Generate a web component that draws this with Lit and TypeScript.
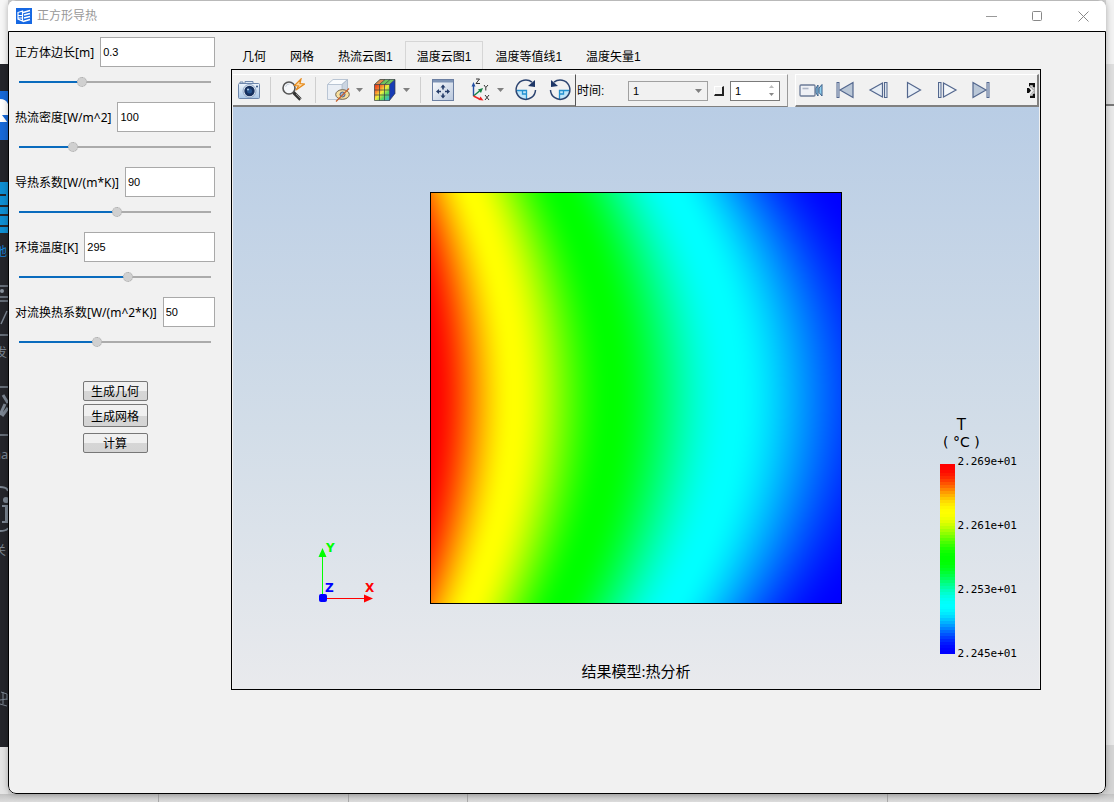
import { LitElement, html, css, svg } from "lit";
import { customElement, state, query } from "lit/decorators.js";

interface Field {
  id: string;
  label: string;
  value: string;
  position: number;
}

const STOPS = [
  [0, 0, 255],
  [0, 255, 255],
  [0, 255, 0],
  [255, 255, 0],
  [255, 0, 0],
];

/** Colour of a normalised temperature, with soft plateaus at each stop. */
function colorAt(t: number): number[] {
  const s = Math.min(0.9999, Math.max(0, t)) * 4;
  const i = Math.floor(s);
  const u = s - i;
  const k = u * u * (3 - 2 * u);
  return STOPS[i].map((c, n) => Math.round(c + (STOPS[i + 1][n] - c) * k));
}

/** Normalised temperature; x in 0..1 from the heated side, v in -1..1. */
function temperature(x: number, v: number): number {
  const mid = 1 - 1.314 * x + 0.404 * x * x;
  const edge = 0.875 - 1.3165 * x + 0.4415 * x * x;
  return mid - (mid - edge) * v * v;
}

@customElement("heat-map")
export class HeatMap extends LitElement {
  static styles = css`
    :host { display: block; box-sizing: border-box; border: 1px solid #000; }
    .field { display: block; width: 100%; height: 100%; }
  `;

  @query("canvas") private canvas!: HTMLCanvasElement;

  firstUpdated() {
    const n = 410;
    const ctx = this.canvas.getContext("2d")!;
    const img = ctx.createImageData(n, n);
    for (let y = 0; y < n; y++) {
      const v = (2 * (y + 0.5)) / n - 1;
      for (let x = 0; x < n; x++) {
        const c = colorAt(temperature((x + 0.5) / n, v));
        const o = (y * n + x) * 4;
        img.data[o] = c[0];
        img.data[o + 1] = c[1];
        img.data[o + 2] = c[2];
        img.data[o + 3] = 255;
      }
    }
    ctx.putImageData(img, 0, 0);
  }

  render() {
    return html`<canvas class="field" width="410" height="410"></canvas>`;
  }
}

@customElement("color-legend")
export class ColorLegend extends LitElement {
  static styles = css`
    :host { display: block; color: #000; font-family: "DejaVu Sans Mono", monospace; }
    .title { font: 15px/17px "DejaVu Sans", "Noto Sans CJK SC", sans-serif; text-align: center; width: 42px; white-space: nowrap; }
    .unit { font-size: 14px; }
    .scale { display: flex; gap: 2px; margin-top: 5px; }
    .bar { width: 15px; height: 190px; margin: 8px 0 6px; display: flex; flex-direction: column; }
    .step { flex: 1; }
    .ticks { display: flex; flex-direction: column; justify-content: space-between; font-size: 11px; line-height: 12px; }
  `;

  render() {
    const steps = Array.from({ length: 64 }, (_, i) => colorAt(1 - i / 63));
    return html`
      <div class="title">T</div>
      <div class="title unit">( °C )</div>
      <div class="scale">
        <div class="bar">
          ${steps.map((c) => html`<div class="step" style="background:rgb(${c.join(",")})"></div>`)}
        </div>
        <div class="ticks">
          <span>2.269e+01</span><span>2.261e+01</span><span>2.253e+01</span><span>2.245e+01</span>
        </div>
      </div>
    `;
  }
}

const shapes: Record<string, unknown> = {
  camera: svg`
    <defs><linearGradient id="cam" x2="0" y2="1"><stop stop-color="#eef5fc"/><stop offset="1" stop-color="#a9c6e6"/></linearGradient></defs>
    <path d="M8 5.500V3.500h8v2M3 5.500V4h3v1.500" fill="#dce8f5" stroke="#7189ad"/>
    <rect x="1.500" y="5.500" width="21" height="15" rx="1" fill="url(#cam)" stroke="#6d86ab"/>
    <circle cx="12.500" cy="13" r="6.500" fill="#e4edf7" stroke="#8fa5c4"/>
    <circle cx="12.500" cy="13" r="5.200" fill="#16305e"/>
    <circle cx="12.500" cy="13" r="2.500" fill="#28558f"/>
    <circle cx="11" cy="11.500" r="1" fill="#b7d3f0"/><circle cx="20" cy="8.500" r="1" fill="#31507f"/>`,
  probe: svg`
    <circle cx="8" cy="10" r="6" fill="#f5f7fa" stroke="#555" stroke-width="1.600"/>
    <path d="M4.500 9a4 4 0 0 1 4-3" fill="none" stroke="#c9d2dc"/>
    <path d="m12.500 14.500 7 7" stroke="#333" stroke-width="3.200"/><path d="m15 16 5 5" stroke="#8b8b8b" stroke-width="1"/>
    <path d="M20 1 13.500 7.500l4 .5-2.500 4 8.500-6-4.500-.5z" fill="#ffd9a0" stroke="#e58a1c" stroke-width="1.200"/>`,
  hide: svg`
    <path d="M1.500 6.500 7 1.500h14.500L16 6.500z" fill="#fafcfe" stroke="#b9c5d4"/>
    <path d="M16 6.500l5.500-5v13l-5.500 7z" fill="#cbd5e1" stroke="#b0bdcd"/>
    <path d="M1.500 6.500H16v15H1.500z" fill="#e9eef5" stroke="#b9c5d4"/>
    <ellipse cx="16.500" cy="16.500" rx="6.800" ry="4.800" fill="#f8dfa0" stroke="#71634b"/>
    <circle cx="16.500" cy="16.500" r="2.500" fill="#9fb4d0" stroke="#4c648b"/>
    <path d="M10 23.500 23 10.500" stroke="#c8602d" stroke-width="1.200"/>`,
  contour: svg`
    <defs><linearGradient id="ct" x2="1" y2="1"><stop stop-color="#e62b18"/><stop offset=".28" stop-color="#f9802b"/><stop offset=".48" stop-color="#f4ed3c"/><stop offset=".7" stop-color="#59d860"/><stop offset="1" stop-color="#29a9e8"/></linearGradient></defs>
    <path d="M1.500 6.500 7 1.500h15l-5.500 5z" fill="#70c35b"/><path d="M1.500 6.500 7 1.500h5l-5.500 5z" fill="#df8a4e"/>
    <path d="M16.500 6.500l5.500-5v14l-5.500 7z" fill="#173cb5"/>
    <path d="M1.500 6.500h15v16h-15z" fill="url(#ct)"/>
    <path d="M1.500 6.500h15v16h-15zM6.500 6.500v16M11.500 6.500v16M1.500 12h15M1.500 17h15M1.500 6.500 7 1.500h15l-5.500 5M6.500 6.500l5.500-5M11.500 6.500l5.500-5M22 1.500v14l-5.500 7" fill="none" stroke="#333b43" stroke-width=".7"/>`,
  fit: svg`
    <defs><linearGradient id="ft" x2="1" y2="1"><stop stop-color="#fff"/><stop offset="1" stop-color="#b7c6dc"/></linearGradient></defs>
    <rect x="1.500" y="1.500" width="21" height="21" fill="url(#ft)" stroke="#6b7fa2"/>
    <path d="M2 2h20v2.500H2z" fill="#7e94b6"/>
    <path d="M12 6.500 9.500 9.500h5zM12 20.500l-2.500-3h5zM5 13.500 8 11v5zM19 13.500 16 11v5z" fill="#263d69"/>
    <path d="M12 9v2.500M12 15.500V18M7 13.500h3M14 13.500h3" stroke="#263d69" stroke-width="1.600"/>`,
  axes: svg`
    <g transform="translate(1 0)">
    <path d="M5.500 18V7" stroke="#2450a4" stroke-width="1.400"/><path d="M5.500 4 3.500 8.500h4z" fill="#2450a4"/>
    <path d="m5.500 18 6-5" stroke="#128244" stroke-width="1.400"/><path d="m15 10-5 1.500 3 3.500z" fill="#128244"/>
    <path d="m5.500 18 6 3" stroke="#e22" stroke-width="1.400"/><path d="m15.500 22.500-3-4-2 3.500z" fill="#e22"/>
    <path d="M8 1h3.500L8 5.500h4M16 7l1.800 2.500L20 7M17.800 9.500v3M17 17l4 5M21 17l-4 5" fill="none" stroke="#333"/></g>`,
  clockwise: svg`
    <path d="M2 12h10.500v9.500A10 10 0 0 1 2 12z" fill="#bfe5fa"/><path d="M3 12.500h9.500V21M8.500 12.500V16h4" fill="none" stroke="#2390cf" stroke-width="1.300"/>
    <path d="M18 4.200A9.700 9.700 0 1 0 21.500 12" fill="none" stroke="#2c4470" stroke-width="1.500"/><path d="M21 2v7l-7-1z" fill="#1c3566"/>`,
  counter: svg`
    <path d="M22 12H11.500v9.500A10 10 0 0 0 22 12z" fill="#bfe5fa"/><path d="M21 12.500h-9.500V21M15.500 12.500V16h-4" fill="none" stroke="#2390cf" stroke-width="1.300"/>
    <path d="M6 4.200A9.700 9.700 0 1 1 2.500 12" fill="none" stroke="#2c4470" stroke-width="1.500"/><path d="M3 2v7l7-1z" fill="#1c3566"/>`,
  video: svg`
    <rect x="1" y="7" width="15" height="11" rx="1" fill="#eef0f5" stroke="#6c7b97" stroke-width="1.300"/><path d="M3.500 10.500h6" stroke="#adb6c6" stroke-width="1.600"/>
    <path d="m17 10 2-3v11l-2-3z" fill="#8fd0ef" stroke="#3c5f88"/><path d="m20 10 3-3.500V18l-3-3.500z" fill="#8fd0ef" stroke="#3c5f88"/>`,
  first: svg`<path d="M20 4.500v15L7 12z" fill="#bac7d7" stroke="#53678e" stroke-width="1.200"/><rect x="4" y="4.500" width="2" height="15" fill="#dce5ef" stroke="#53678e"/>`,
  back: svg`<path d="M15.500 5v14L3 12z" fill="#e6edf5" stroke="#53678e" stroke-width="1.200"/><rect x="17.500" y="4.500" width="2.500" height="15" fill="#dce5ef" stroke="#53678e"/>`,
  play: svg`<path d="M6.500 4.500v15L19.500 12z" fill="#e9eff6" stroke="#53678e" stroke-width="1.200"/>`,
  next: svg`<path d="M8.500 5v14L21 12z" fill="#f4f7fa" stroke="#53678e" stroke-width="1.200"/><rect x="3.500" y="4.500" width="2.500" height="15" fill="#dce5ef" stroke="#53678e"/>`,
  last: svg`<path d="M4 4.500v15L17 12z" fill="#bac7d7" stroke="#53678e" stroke-width="1.200"/><rect x="18" y="4.500" width="2" height="15" fill="#dce5ef" stroke="#53678e"/>`,
};

@customElement("app-root")
export class AppRoot extends LitElement {
  static styles = css`
    * { box-sizing: border-box; }
    :host {
      display: grid;
      grid-template: 1fr 8px / 8px 1fr 8px;
      height: 100vh;
      background: #d8d8d8;
      color: #000;
      font: 12px/16px "Noto Sans", "Noto Sans CJK SC", sans-serif;
      overflow: hidden;
    }
    button, input, select { font: inherit; color: inherit; margin: 0; padding: 0; }

    .strip-left { grid-area: 1 / 1; background: linear-gradient(#f6f6f6 64px, #24252a 64px 747px, #e4e4e4 747px); overflow: hidden; }
    .strip-left svg { display: block; }
    .strip-right { grid-area: 1 / 3; background: linear-gradient(#f2f2f2 64px, #dedede 64px 104px, #777 104px 106px, #e8e8e8 106px 745px, #d4d4d4 745px); }
    .strip-bottom {
      grid-area: 2 / 1 / 3 / 4;
      display: grid;
      grid-template-columns: 158fr 190fr 119fr 420fr 227fr;
      background: linear-gradient(#c2c2c2, #dcdcdc);
    }
    .strip-bottom div + div { border-left: 1px solid #a8a8a8; }

    .window {
      grid-area: 1 / 2;
      display: flex;
      flex-direction: column;
      background: #f1f1f1;
      border-radius: 8px;
      overflow: hidden;
      box-shadow: 0 0 6px rgba(0, 0, 0, 0.3);
    }
    .titlebar {
      height: 31px;
      display: flex;
      align-items: center;
      background: #fff;
      border-top: 1px solid #b9b9b9;
      color: #999;
      padding-left: 8px;
    }
    .titlebar .name { margin: 0 auto 0 5px; font-weight: 400; font-size: 12px; }
    .caption { width: 46px; height: 30px; border: 0; background: none; display: grid; place-items: center; }

    .body {
      flex: 1;
      display: flex;
      align-items: stretch;
      border: 1px solid #000;
      border-radius: 0 0 8px 8px;
      padding: 5px 64px 103px 6px;
      gap: 15px;
    }
    .params { width: 200px; flex: none; }
    .field { display: grid; grid-template-columns: auto 1fr; align-items: center; column-gap: 6px; padding-bottom: 5px; }
    .field-label { white-space: nowrap; padding-top: 2px; }
    .text {
      width: 100%;
      min-width: 0;
      height: 30px;
      border: 1px solid #a9a9a9;
      background: #fff;
      padding: 0 2px;
      font: 11px/16px "Liberation Sans", sans-serif;
      outline: 0;
    }
    .range { grid-column: 1 / 3; margin: 0 4px; height: 30px; appearance: none; background: none; display: block; min-width: 0; }
    .range::-webkit-slider-runnable-track {
      height: 2px;
      background: linear-gradient(90deg, #0a6bbd var(--fill), #ababab var(--fill));
    }
    .range::-webkit-slider-thumb {
      appearance: none;
      width: 10px;
      height: 10px;
      margin-top: -4px;
      border-radius: 50%;
      background: #d0d0d0;
      border: 1px dotted #a8a8a8;
    }
    .actions { display: flex; flex-direction: column; align-items: center; gap: 3px; padding-top: 19px; }
    .action {
      width: 65px;
      height: 20px;
      border: 1px solid #777;
      border-radius: 2px;
      background: linear-gradient(#f0f0f0 50%, #d6d6d6 50%, #d4d4d4);
      line-height: 16px;
      padding-top: 2px;
    }
    .action.tall { height: 23px; }
    .action:last-child { margin-top: 3px; }

    .results { flex: 1; min-width: 0; display: flex; flex-direction: column; padding-top: 4px; }
    .tabs { display: flex; height: 28px; }
    .tab { border: 1px solid transparent; border-bottom: 0; background: none; padding: 2px 11px 0; white-space: nowrap; font-family: "Liberation Sans", "Noto Sans CJK SC", sans-serif; }
    .tab.active { border-color: #d6d6d6; background: #f1f1f1; height: 29px; padding-top: 1px; }
    .panel { flex: 1; min-height: 0; display: flex; flex-direction: column; border: 1px solid #000; margin-left: 1px; }

    .toolbar { flex: none; display: flex; height: 37px; padding: 4px 1px 0; }
    .group { display: flex; align-items: center; border-top: 1px solid #fff; border-bottom: 2px solid #808080; }
    .view { padding: 0 3px 0 4px; border-right: 1px solid #555; }
    .time { flex: 1 0 212px; max-width: 212px; border-right: 1px solid #999; border-bottom-width: 1px; padding-left: 1px; }
    .media { flex: 1; margin-left: 7px; border-left: 1px solid #fff; border-right: 2px solid #808080; padding: 0 2px 0 3px; overflow: hidden; }
    .tool { width: 24px; height: 24px; border: 0; background: none; flex: none; }
    .tool svg { display: block; }
    .tool + .tool, .arrow + .tool { margin-left: 10px; }
    .sep { width: 1px; height: 26px; background: #cfcfcf; margin: 0 10px; }
    .sep.lead { margin-left: 9px; }
    .gap { width: 12px; }
    .arrow { width: 7px; height: 16px; border: 0; background: none; margin-left: 6px; flex: none; display: grid; place-items: center; }
    .time-label { width: 51px; white-space: nowrap; font-family: "Liberation Sans", "Noto Sans CJK SC", sans-serif; }
    .select-box { display: grid; width: 80px; height: 20px; flex: none; align-items: center; }
    .select-box > *, .spin-box > * { grid-area: 1 / 1; }
    .select { width: 100%; height: 20px; appearance: none; border: 1px solid #a0a0a0; border-radius: 0; background: #f1f1f1; padding: 0 4px; font: 11px/16px "Liberation Sans", sans-serif; }
    .mark { justify-self: end; margin-right: 6px; pointer-events: none; }
    .mini { width: 10px; height: 10px; flex: none; border: 1px solid #fff; border-right: 2px solid #222; border-bottom: 2px solid #222; background: #f1f1f1; margin: 0 6px; }
    .spin-box { display: grid; width: 50px; height: 20px; flex: none; align-items: center; }
    .spin { width: 100%; height: 20px; border: 1px solid #7a7a7a; background: #fff; padding: 0 4px; font: 11px/16px "Liberation Sans", sans-serif; appearance: textfield; }
    .spin::-webkit-inner-spin-button { appearance: none; }
    .more { margin-left: auto; width: 9px; height: 15px; border: 0; background: none; flex: none; }
    .more svg { display: block; }

    .scene {
      flex: 1;
      min-height: 0;
      position: relative;
      display: grid;
      place-items: center;
      margin: 0 1px;
      background: linear-gradient(#b9cde5, #d2dde8 55%, #e9eaed);
    }
    .map { height: 70.7%; aspect-ratio: 1; }
    .legend { position: absolute; right: 22px; bottom: 29px; }
    .triad { position: absolute; left: 82px; bottom: 81px; display: block; }
    .triad text { font: bold 12px "DejaVu Sans", sans-serif; }
    .note { position: absolute; left: 0; right: 0; bottom: 7px; text-align: center; font: 15px/22px "Noto Sans", "Noto Sans CJK SC", sans-serif; }
  `;

  @state() private fields: Field[] = [
    { id: "side", label: "正方体边长[m]", value: "0.3", position: 32 },
    { id: "flux", label: "热流密度[W/m^2]", value: "100", position: 27 },
    { id: "conductivity", label: "导热系数[W/(m*K)]", value: "90", position: 51 },
    { id: "ambient", label: "环境温度[K]", value: "295", position: 57 },
    { id: "convection", label: "对流换热系数[W/(m^2*K)]", value: "50", position: 40 },
  ];
  @state() private activeTab = 3;

  private tabNames = ["几何", "网格", "热流云图1", "温度云图1", "温度等值线1", "温度矢量1"];

  private slide(index: number, e: Event) {
    const position = Number((e.target as HTMLInputElement).value);
    this.fields = this.fields.map((f, i) => (i === index ? { ...f, position } : f));
  }

  private tool(name: string, label: string) {
    return html`<button class="tool" aria-label=${label}><svg width="24" height="24" viewBox="0 0 24 24">${shapes[name]}</svg></button>`;
  }

  private arrow(label: string) {
    return html`<button class="arrow" aria-label=${label}><svg width="7" height="4"><path d="M0 0h7L3.500 4z" fill="#808080"/></svg></button>`;
  }

  private renderField(f: Field, i: number) {
    return html`
      <div class="field">
        <label class="field-label" for=${f.id}>${f.label}</label>
        <input class="text" id=${f.id} type="text" .value=${f.value} />
        <input class="range" type="range" min="0" max="100" aria-label=${f.label}
          .value=${String(f.position)} style="--fill:${f.position}%"
          @input=${(e: Event) => this.slide(i, e)} />
      </div>
    `;
  }

  private renderToolbar() {
    return html`
      <div class="toolbar">
        <div class="group view">
          ${this.tool("camera", "截图")}
          <div class="sep lead"></div>
          ${this.tool("probe", "探测")}
          <div class="sep"></div>
          ${this.tool("hide", "显示")}${this.arrow("显示选项")}
          ${this.tool("contour", "云图")}${this.arrow("云图选项")}
          <div class="sep"></div>
          ${this.tool("fit", "适应窗口")}
          <div class="gap"></div>
          ${this.tool("axes", "视角")}${this.arrow("视角选项")}
          ${this.tool("clockwise", "顺时针")}
          ${this.tool("counter", "逆时针")}
        </div>
        <div class="group time">
          <label class="time-label" for="time">时间:</label>
          <div class="select-box">
            <select class="select" id="time"><option>1</option></select>
            <svg class="mark" width="7" height="4"><path d="M0 0h7L3.500 4z" fill="#808080"/></svg>
          </div>
          <button class="mini" aria-label="设置"></button>
          <div class="spin-box">
            <input class="spin" type="number" value="1" aria-label="步" />
            <svg class="mark" width="5" height="11"><path d="M0 3h5L2.500 0z" fill="#bbb"/><path d="M0 8h5L2.500 11z" fill="#888"/></svg>
          </div>
        </div>
        <div class="group media">
          ${this.tool("video", "录制")}
          ${this.tool("first", "首帧")}
          ${this.tool("back", "上一帧")}
          ${this.tool("play", "播放")}
          ${this.tool("next", "下一帧")}
          ${this.tool("last", "末帧")}
          <button class="more" aria-label="更多"><svg width="9" height="15" viewBox="0 0 9 15"><path d="M1 5h2l2 2.500L3 10H1zM3 0h6v15H4v-3l4-4.500L3 3z" fill="#111"/><path d="M4 3h2v2h2v5H6v2H4" fill="none" stroke="#ddd" stroke-width="1.500"/></svg></button>
        </div>
      </div>
    `;
  }

  render() {
    return html`
      <div class="strip-left" aria-hidden="true">
        <svg width="8" height="760">
          <rect y="91" width="8" height="49" fill="#1769d8"/>
          <path d="M0 99q6 0 8 5v18H0z" fill="#fff"/><path d="M2 115h6v8z" fill="#1769d8"/>
          <rect y="182" width="8" height="51" fill="#0e8fd3"/>
          <path d="M0 195h6M0 206h8M0 215h8M0 226h8" stroke="#24252a" stroke-width="2"/>
          <text x="-5" y="256" font-size="12" fill="#1583d8">地</text>
          <path d="M0 286h8M0 297h8M0 301h8M1 324l6-13M0 335h8M0 387h8M0 435h8" stroke="#7b8591" stroke-width="1.500"/>
          <circle cx="2" cy="291" r="2" fill="#8a939d"/>
          <text x="-5" y="357" font-size="12" fill="#7b8591">发</text>
          <path d="M0 415l5-11M3 395l5 8M2 416l6-8" stroke="#7b8591" stroke-width="3"/>
          <text x="-7" y="459" font-size="13" fill="#7b8591">na</text>
          <path d="M0 487q7 0 8 4M0 531q7 0 8-3" fill="none" stroke="#7b8591" stroke-width="2"/>
          <circle cx="6" cy="500" r="3" fill="#7b8591"/><path d="M2 506h6v16H2M6 506v16" stroke="#7b8591" stroke-width="2" fill="none"/>
          <text x="-6" y="555" font-size="12" fill="#7b8591">关</text>
          <path d="M0 704l7 2M1 692l6 2v6M0 700l7-1M3 692v12" stroke="#7b8591" fill="none"/>
        </svg>
      </div>
      <div class="strip-right" aria-hidden="true"></div>
      <div class="strip-bottom" aria-hidden="true"><div></div><div></div><div></div><div></div><div></div></div>

      <main class="window">
        <header class="titlebar">
          <svg width="16" height="16" viewBox="0 0 16 16">
            <rect width="16" height="16" fill="#1668e3"/>
            <path d="M2 4.500 6.500 3v10L2 11zM2 7.500h4.500M2 10h4.500" fill="none" stroke="#fff" stroke-width="1.200"/>
            <path d="M7 4.500 14 2.500M8 7l6-1.500M8 10l6-1.500M7 13.500l7-2" fill="none" stroke="#fff" stroke-width="1.500"/>
          </svg>
          <h1 class="name">正方形导热</h1>
          <button class="caption" aria-label="最小化"><svg width="11" height="11"><path d="M0 5.500h11" stroke="#999"/></svg></button>
          <button class="caption" aria-label="最大化"><svg width="11" height="11"><rect x=".5" y=".5" width="9" height="9" rx="1" fill="none" stroke="#888"/></svg></button>
          <button class="caption" aria-label="关闭"><svg width="11" height="11"><path d="m.5.500 10 10m0-10-10 10" stroke="#888"/></svg></button>
        </header>

        <div class="body">
          <section class="params">
            ${this.fields.map((f, i) => this.renderField(f, i))}
            <div class="actions">
              <button class="action">生成几何</button>
              <button class="action tall">生成网格</button>
              <button class="action">计算</button>
            </div>
          </section>

          <section class="results">
            <div class="tabs" role="tablist">
              ${this.tabNames.map(
                (name, i) => html`<button role="tab" class="tab ${i === this.activeTab ? "active" : ""}"
                  aria-selected=${i === this.activeTab} @click=${() => (this.activeTab = i)}>${name}</button>`
              )}
            </div>
            <div class="panel">
              ${this.renderToolbar()}
              <div class="scene">
                <heat-map class="map"></heat-map>
                <svg class="triad" width="66" height="66" viewBox="0 0 66 66">
                  <path d="M7 14h1v42h-1z" fill="#0f0"/><path d="M7.500 6 3.500 15h8z" fill="#0f0"/>
                  <path d="M8 56h42v1H8z" fill="#f00"/><path d="M58 56.500 49 52.500v8z" fill="#f00"/>
                  <rect x="4" y="52" width="8" height="8" rx="2" fill="#00f"/>
                  <text x="11" y="10" fill="#0f0">Y</text>
                  <text x="10" y="50" fill="#00f">Z</text>
                  <text x="50" y="50" fill="#f00">X</text>
                </svg>
                <color-legend class="legend"></color-legend>
                <div class="note">结果模型:热分析</div>
              </div>
            </div>
          </section>
        </div>
      </main>
    `;
  }
}
